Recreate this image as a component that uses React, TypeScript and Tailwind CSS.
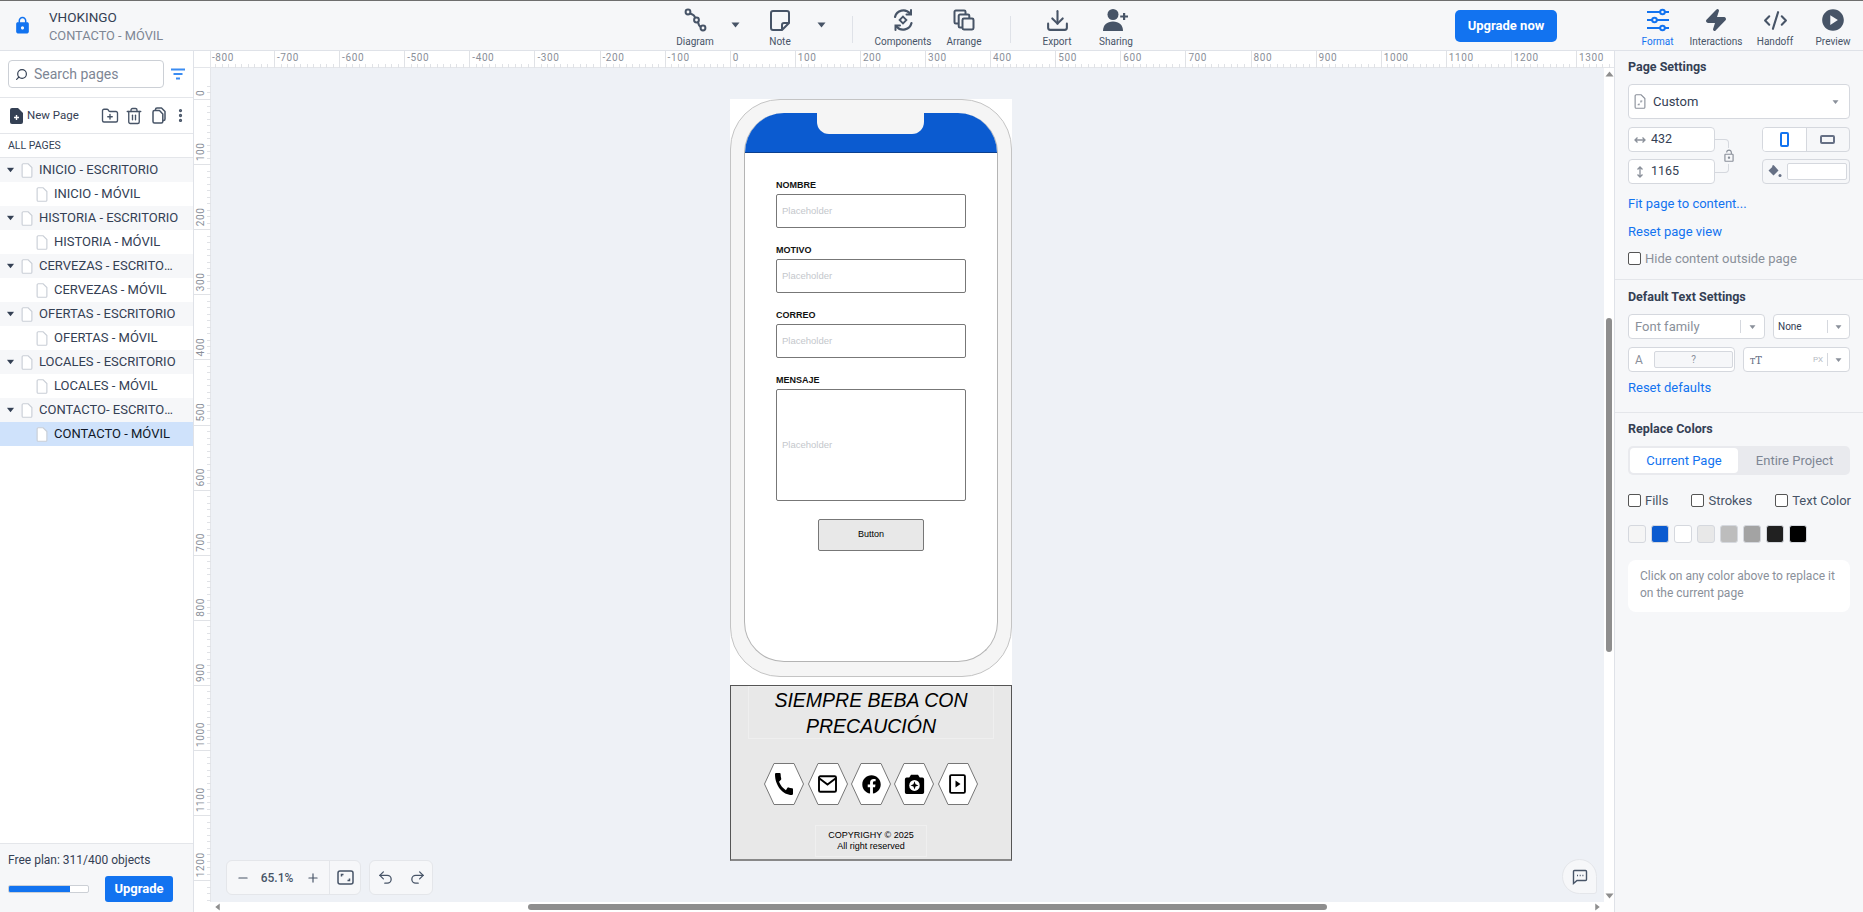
import React from 'react';
import { Search, Plus, Minus, Undo2, Redo2, MoreVertical, Trash2, FolderPlus, Zap, Code2, Download } from 'lucide-react';
import { FaFacebook } from 'react-icons/fa';
import { MdLock, MdOutlineLockOpen, MdPlayCircle } from 'react-icons/md';

const Caret = ({ className = '' }: { className?: string }) => (
  <svg width="9" height="6" viewBox="0 0 9 6" className={className}><path d="M0.5 0.5h8L4.5 5.5z" fill="currentColor" /></svg>
);

const PageIcon = ({ size = 14 }: { size?: number }) => (
  <svg width={size} height={size * 1.25} viewBox="0 0 12 16" fill="none" stroke="#c9ced6" strokeWidth="1.2">
    <path d="M2 .8h5.2l4 4V14a1.2 1.2 0 0 1-1.2 1.2H2A1.2 1.2 0 0 1 .8 14V2A1.2 1.2 0 0 1 2 .8z" fill="#fff" />
  </svg>
);

const DiagramIcon = () => (
  <svg width="24" height="24" viewBox="0 0 24 24" fill="none" stroke="#475467" strokeWidth="2">
    <circle cx="5" cy="4" r="2.4" /><circle cx="13.5" cy="12" r="2.4" /><circle cx="20" cy="20" r="2.4" />
    <path d="M7 5.5c3 1 5 2 5 4.3M15 14c.5 3 1.5 4.5 3 5" />
  </svg>
);
const NoteIcon = () => (
  <svg width="24" height="24" viewBox="0 0 24 24" fill="none" stroke="#475467" strokeWidth="2" strokeLinejoin="round">
    <path d="M5 3h14a2 2 0 0 1 2 2v10l-7 7H5a2 2 0 0 1-2-2V5a2 2 0 0 1 2-2z" /><path d="M21 15h-5a2 2 0 0 0-2 2v5" />
  </svg>
);
const ComponentsIcon = () => (
  <svg width="24" height="24" viewBox="0 0 24 24" fill="none" stroke="#475467" strokeWidth="2.2" strokeLinecap="round">
    <path d="M4 9a8.6 8.6 0 0 1 15-3.5M20.5 15a8.6 8.6 0 0 1-15 3.5" />
    <path d="M20 2v4.5h-4.5M4.5 22v-4.5H9" strokeWidth="2" />
    <path d="M12 8.6l3.4 3.4-3.4 3.4L8.6 12z" strokeWidth="1.8" />
  </svg>
);
const ArrangeIcon = () => (
  <svg width="24" height="24" viewBox="0 0 24 24" fill="none" stroke="#475467" strokeWidth="2">
    <path d="M6 15.5H3.8A1.3 1.3 0 0 1 2.5 14.2V3.8a1.3 1.3 0 0 1 1.3-1.3h8.4A1.3 1.3 0 0 1 13.5 3.8V6" />
    <path d="M10 19.5H8a1.3 1.3 0 0 1-1.3-1.3V7.8A1.3 1.3 0 0 1 8 6.5h8a1.3 1.3 0 0 1 1.3 1.3V10" />
    <rect x="10.5" y="10.5" width="11" height="11" rx="1.4" />
  </svg>
);
const SlidersIcon = () => (
  <svg width="24" height="24" viewBox="0 0 24 24" fill="none" stroke="#1273f0" strokeWidth="2">
    <path d="M1 4h13M19 4h4M1 12h5M11 12h12M1 20h13M19 20h4" />
    <circle cx="16.5" cy="4" r="2.3" /><circle cx="8.5" cy="12" r="2.3" /><circle cx="16.5" cy="20" r="2.3" />
  </svg>
);
const FilterIcon = () => (
  <svg width="14" height="12" viewBox="0 0 14 12" fill="none" stroke="#3b8cf2" strokeWidth="1.8"><path d="M0 1.5h14M2.5 6h9M5 10.5h4" /></svg>
);
const PagesCopyIcon = () => (
  <svg width="14" height="17" viewBox="0 0 14 17" fill="none" stroke="#475467" strokeWidth="1.5" strokeLinejoin="round">
    <path d="M3.500 3.200V2.500A1.500 1.500 0 0 1 5 1h4.500L13 4.500v7.500a1.500 1.500 0 0 1-1.500 1.500h-.7" />
    <path d="M2.500 3.500h5L10.800 7v7.500a1.500 1.500 0 0 1-1.500 1.500H2.500A1.500 1.500 0 0 1 1 14.500V5a1.500 1.500 0 0 1 1.500-1.500z" />
  </svg>
);

const Tool = ({ w, icon, label, active }: { w: string; icon: React.ReactNode; label: string; active?: boolean }) => (
  <div className={`${w} flex flex-col items-center shrink-0`}>
    <div className="h-[26px] flex items-center justify-center mt-[6px]">{icon}</div>
    <div className={`text-[10px] leading-[12px] mt-[3px] whitespace-nowrap ${active ? 'text-[#1273f0]' : 'text-[#475467]'}`}>{label}</div>
  </div>
);

const Header = () => (
  <header className="h-[51px] shrink-0 flex bg-[#f6f7f9] border-t border-t-[#6e6e6e] border-b border-b-[#dfe2e8]">
    <div className="w-[665px] shrink-0 flex">
      <div className="w-[49px] flex items-center justify-center pr-[4px]"><MdLock size={19} color="#1273f0" /></div>
      <div className="pt-[8px]">
        <div className="text-[13.500px] leading-[16px] text-[#344054]">VHOKINGO</div>
        <div className="text-[12.800px] leading-[16px] mt-[3px] text-[#7d8694]">CONTACTO - MÓVIL</div>
      </div>
    </div>
    <Tool w="w-[60px]" icon={<DiagramIcon />} label="Diagram" />
    <div className="w-[20px] flex justify-center pt-[21px] text-[#475467]"><Caret /></div>
    <div className="w-[5px]" />
    <Tool w="w-[60px]" icon={<NoteIcon />} label="Note" />
    <div className="w-[22px] flex justify-center pt-[21px] text-[#475467]"><Caret /></div>
    <div className="w-[20px]" />
    <div className="w-px h-[27px] mt-[15px] bg-[#dfe2e8]" />
    <div className="w-[18px]" />
    <Tool w="w-[64px]" icon={<ComponentsIcon />} label="Components" />
    <div className="w-[4px]" />
    <Tool w="w-[50px]" icon={<ArrangeIcon />} label="Arrange" />
    <div className="w-[21px]" />
    <div className="w-px h-[27px] mt-[15px] bg-[#dfe2e8]" />
    <div className="w-[21px]" />
    <Tool w="w-[50px]" icon={<Download size={25} color="#475467" strokeWidth={2} />} label="Export" />
    <div className="w-[9px]" />
    <Tool w="w-[50px]" icon={<svg width="26" height="24" viewBox="0 0 26 24" fill="#475467"><circle cx="10" cy="6.5" r="5.5" /><path d="M0 23c0-6 4-9.5 10-9.5S20 17 20 23z" /><path d="M20 5h2.2V7.500H25v2h-2.800V12H20V9.500h-2.800v-2H20z" /></svg>} label="Sharing" />
    <div className="w-[314px]" />
    <div className="w-[102px] h-[32px] mt-[9px] rounded-[5px] bg-[#1273f0] text-white text-[13px] font-bold flex items-center justify-center">Upgrade now</div>
    <div className="w-[75px]" />
    <Tool w="w-[51px]" active icon={<SlidersIcon />} label="Format" />
    <Tool w="w-[66px]" icon={<Zap size={24} color="#475467" fill="#475467" />} label="Interactions" />
    <Tool w="w-[52px]" icon={<Code2 size={25} color="#475467" strokeWidth={2} />} label="Handoff" />
    <div className="w-[6px]" />
    <Tool w="w-[52px]" icon={<MdPlayCircle size={26} color="#475467" />} label="Preview" />
  </header>
);

const pages = ['INICIO', 'HISTORIA', 'CERVEZAS', 'OFERTAS', 'LOCALES', 'CONTACTO'];

const Sidebar = () => (
  <aside className="w-[194px] shrink-0 flex flex-col bg-white border-r border-[#dfe2e8]">
    <div className="h-[47px] shrink-0 flex items-center pl-[8px] border-b border-[#e4e6ea]">
      <div className="w-[156px] h-[28px] rounded-[4px] border border-[#ccd0d6] flex items-center pl-[6px] gap-[6px]">
        <Search size={13} color="#344054" className="-scale-x-100" strokeWidth={2.2} />
        <span className="text-[14px] text-[#7d8694]">Search pages</span>
      </div>
      <div className="ml-[7px]"><FilterIcon /></div>
    </div>
    <div className="h-[36px] shrink-0 flex items-center border-b border-[#e4e6ea] pl-[10px] text-[#475467]">
      <svg width="13" height="16" viewBox="0 0 13 16"><path d="M2 0h6l5 5v9a2 2 0 0 1-2 2H2a2 2 0 0 1-2-2V2a2 2 0 0 1 2-2z" fill="#344054" /><path d="M6.500 7v5M4 9.500h5" stroke="#fff" strokeWidth="1.4" /></svg>
      <span className="ml-[4px] text-[11.500px] text-[#344054]">New Page</span>
      <FolderPlus size={18} className="ml-[22px]" strokeWidth={1.8} />
      <Trash2 size={18} className="ml-[6px]" strokeWidth={1.8} />
      <div className="ml-[9px] flex"><PagesCopyIcon /></div>
      <MoreVertical size={17} className="ml-[6px]" strokeWidth={2.6} />
    </div>
    <div className="h-[24px] shrink-0 flex items-center pl-[8px] text-[10.500px] text-[#344054] border-b border-[#e4e6ea]">ALL PAGES</div>
    <div className="flex-1">
      {pages.map((p) => (
        <div key={p}>
          <div className="h-[24px] flex items-center bg-[#f6f7f9] pl-[6px] text-[#344054]">
            <Caret className="text-[#344054] scale-90" />
            <span className="ml-[6px] flex"><PageIcon size={12} /></span>
            <span className="ml-[6px] text-[13px] truncate w-[141px]">{p === 'CONTACTO' ? 'CONTACTO- ESCRITORIO' : `${p} - ESCRITORIO`}</span>
          </div>
          <div className={`h-[24px] flex items-center pl-[36px] ${p === 'CONTACTO' ? 'bg-[#cfe2fb] text-[#101828]' : 'text-[#344054]'}`}>
            <PageIcon size={12} />
            <span className="ml-[6px] text-[13px]">{p} - MÓVIL</span>
          </div>
        </div>
      ))}
    </div>
    <div className="h-[69px] shrink-0 bg-[#f6f7f9] border-t border-[#e4e6ea] pl-[8px]">
      <div className="text-[12px] leading-[14px] text-[#344054] mt-[9px]">Free plan: 311/400 objects</div>
      <div className="flex items-center mt-[9px]">
        <div className="w-[81px] h-[8px] rounded-[2px] border border-[#ccd0d6] bg-white overflow-hidden"><div className="w-[61px] h-full bg-[#1273f0]" /></div>
        <div className="ml-[16px] w-[68px] h-[26px] rounded-[3px] bg-[#1273f0] text-white text-[13px] font-bold flex items-center justify-center">Upgrade</div>
      </div>
    </div>
  </aside>
);

const hLabels = Array.from({ length: 22 }, (_, i) => -800 + i * 100);
const hTicks = Array.from({ length: 220 }, (_, i) => -800 + i * 10);
const vLabels = Array.from({ length: 13 }, (_, i) => i * 100);
const vTicks = Array.from({ length: 135 }, (_, i) => -20 + i * 10);

const HRuler = () => (
  <svg width="1403" height="17" className="block">
    <line x1="0" x2="1403" y1="16.5" y2="16.5" stroke="#e4e6ea" />
    {hTicks.map((u) => {
      const x = Math.round(729.7 + 0.651 * u - 211) + 0.5;
      return <line key={u} x1={x} x2={x} y1={u % 100 === 0 ? 0 : 13} y2={17} stroke="#e0e2e6" />;
    })}
    {hLabels.map((u) => (
      <text key={u} x={729.7 + 0.651 * u - 211 + 3} y={10} fontSize="10" letterSpacing="0.6" fill="#8a8f99">{u}</text>
    ))}
  </svg>
);
const VRuler = () => (
  <svg width="17" height="835" className="block shrink-0">
    <line x1="16.5" x2="16.5" y1="0" y2="835" stroke="#e4e6ea" />
    {vTicks.map((u) => {
      const y = Math.round(99 + 0.651 * u - 68) + 0.5;
      return <line key={u} y1={y} y2={y} x1={u % 100 === 0 ? 0 : 13} x2={17} stroke="#e0e2e6" />;
    })}
    {vLabels.map((u) => {
      const y = 99 + 0.651 * u - 68 - 3;
      return <text key={u} transform={`translate(10 ${y}) rotate(-90)`} fontSize="10" letterSpacing="0.6" fill="#8a8f99">{u}</text>;
    })}
  </svg>
);

const Field = ({ label, tall }: { label: string; tall?: boolean }) => (
  <div className="mb-[18px]">
    <div className="text-[9px] leading-[9px] pb-[4px] font-bold text-[#111]">{label}</div>
    <div className={`w-[190px] ${tall ? 'h-[112px]' : 'h-[34px]'} bg-white border border-[#777] rounded-[2px] flex items-center pl-[5px] text-[9.500px] text-[#c4c7cc]`}>Placeholder</div>
  </div>
);

const PhoneGlyph = () => (
  <svg width="18" height="22" viewBox="3 3 18 18" preserveAspectRatio="none">
    <path d="M20.01 15.38c-1.23 0-2.42-.2-3.53-.56a.977.977 0 0 0-1.01.24l-1.57 1.97c-2.83-1.35-5.48-3.9-6.89-6.83l1.95-1.66c.27-.28.35-.67.24-1.02-.37-1.11-.56-2.3-.56-3.53 0-.54-.45-.99-.99-.99H4.19C3.65 3 3 3.24 3 3.99 3 13.28 10.73 21 20.01 21c.71 0 .99-.63.99-1.18v-3.45c0-.54-.45-.99-.99-.99z" fill="#000" />
  </svg>
);
const MailGlyph = () => (
  <svg width="19" height="18" viewBox="0 0 19 18" fill="none" stroke="#000" strokeWidth="1.900">
    <rect x="1" y="1.200" width="17" height="15.600" rx="1.400" /><path d="M1.500 3.500l8 6 8-6" />
  </svg>
);
const CameraStar = () => (
  <svg width="21" height="22" viewBox="0 0 24 24" preserveAspectRatio="none">
    <path d="M8 2h8l2 3h3a2 2 0 0 1 2 2v14a2 2 0 0 1-2 2H3a2 2 0 0 1-2-2V7a2 2 0 0 1 2-2h3z" fill="#000" />
    <circle cx="12" cy="13.500" r="6" fill="#fff" />
    <path d="M12 9l1.200 3.300L16.500 13.500l-3.300 1.200L12 18l-1.200-3.300L7.500 13.500l3.300-1.200z" fill="#000" />
  </svg>
);
const VideoBox = () => (
  <svg width="17" height="20" viewBox="0 0 17 20" fill="none"><rect x="1.100" y="1.100" width="14.800" height="17.800" rx="1.200" stroke="#000" strokeWidth="1.900" /><path d="M6.500 6.500l5 3.500-5 3.500z" fill="#000" /></svg>
);

const Hex = ({ children }: { children: React.ReactNode }) => (
  <div className="relative w-[40px] h-[42px] flex items-center justify-center">
    <svg width="40" height="42" viewBox="0 0 40 42" className="absolute inset-0">
      <polygon points="10,0.5 30,0.5 39.500,21 30,41.500 10,41.500 0.500,21" fill="#fff" stroke="#777" />
    </svg>
    <div className="relative flex">{children}</div>
  </div>
);

const Design = () => (
  <div className="absolute left-[519px] top-[31px] w-[282px] h-[762px] bg-white flex flex-col" style={{ fontFamily: '"Liberation Sans", Arial, sans-serif' }}>
    <div className="h-[578px] bg-[#f5f5f5] border border-[#c4c4c4] rounded-[50px] pt-[13px] px-[13px] pb-[14px] flex">
      <div className="relative flex-1 bg-white border-x border-b border-[#b4b4b4] rounded-[40px] overflow-hidden flex flex-col">
        <div className="h-[40px] shrink-0 bg-[#0b5bd0] border-b border-[#0a3f8f]" />
        <div className="absolute left-[72px] top-0 w-[107px] h-[21px] bg-[#f5f5f5] rounded-b-[12px]" />
        <div className="pl-[31px] pt-[28px]">
          <Field label="NOMBRE" />
          <Field label="MOTIVO" />
          <Field label="CORREO" />
          <Field label="MENSAJE" tall />
          <div className="ml-[42px] w-[106px] h-[32px] bg-[#e8e8e8] border border-[#777] rounded-[2px] flex items-center justify-center text-[9px] text-black">Button</div>
        </div>
      </div>
    </div>
    <div className="h-[8px]" />
    <div className="flex-1 bg-[#e8e8e8] border border-[#555] border-b-2 border-b-[#888] flex flex-col items-center">
      <div className="w-[246px] h-[53px] border border-[#efefef] text-[19.500px] leading-[26px] italic text-black text-center">SIEMPRE BEBA CON<br />PRECAUCIÓN</div>
      <div className="flex gap-[3.300px] mt-[24px]">
        <Hex><PhoneGlyph /></Hex>
        <Hex><MailGlyph /></Hex>
        <Hex><FaFacebook size={19} color="#000" /></Hex>
        <Hex><CameraStar /></Hex>
        <Hex><VideoBox /></Hex>
      </div>
      <div className="mt-[20px] w-[112px] h-[32px] border border-[#efefef] text-[9px] leading-[11px] text-black text-center flex flex-col justify-center">
        <div>COPYRIGHY © 2025</div>
        <div>All right reserved</div>
      </div>
    </div>
  </div>
);

const FitIcon = () => (
  <svg width="17" height="15" viewBox="0 0 17 15" fill="none" stroke="#475467" strokeWidth="1.500">
    <rect x="1" y="1" width="15" height="13" rx="2" />
    <path d="M4.500 6.500v-2h2M12.500 8.500v2h-2" />
  </svg>
);

const CanvasControls = () => (
  <>
    <div className="absolute left-[15px] top-[792px] w-[135px] h-[35px] bg-[#f6f7f9] border border-[#e4e6ea] rounded-[6px] flex items-center text-[#475467]">
      <Minus size={14} className="ml-[9px]" strokeWidth={2} />
      <span className="ml-[8px] w-[38px] text-center text-[12px] font-medium">65.1%</span>
      <Plus size={14} className="ml-[10px]" strokeWidth={2} />
      <div className="ml-[9px] h-full w-px bg-[#e4e6ea]" />
      <div className="ml-[7px] flex"><FitIcon /></div>
    </div>
    <div className="absolute left-[158px] top-[792px] w-[64px] h-[35px] bg-[#f6f7f9] border border-[#e4e6ea] rounded-[6px] flex items-center justify-center gap-[15px] text-[#475467]">
      <Undo2 size={17} strokeWidth={1.800} /><Redo2 size={17} strokeWidth={1.800} />
    </div>
    <div className="absolute left-[1351px] top-[791px] w-[35px] h-[35px] bg-[#f6f7f9] border border-[#e4e6ea] rounded-[18px] rounded-br-[3px] flex items-center justify-center">
      <svg width="16" height="16" viewBox="0 0 16 16" fill="none" stroke="#475467" strokeWidth="1.400"><path d="M2.500 1.500h11a1 1 0 0 1 1 1v8a1 1 0 0 1-1 1H5L1.500 14.500V2.500a1 1 0 0 1 1-1z" /><path d="M5 6.500h1M7.700 6.500h1M10.400 6.500h1" /></svg>
    </div>
  </>
);

const Main = () => (
  <main className="flex-1 min-w-0 flex flex-col bg-white">
    <div className="h-[17px] shrink-0 flex">
      <div className="w-[17px] shrink-0 border-b border-r border-[#e4e6ea]" />
      <HRuler />
    </div>
    <div className="flex-1 min-h-0 flex">
      <VRuler />
      <div className="relative flex-1 bg-[#eef1f6] overflow-hidden">
        <Design />
        <CanvasControls />
      </div>
      <div className="w-[10px] shrink-0 bg-white flex flex-col items-center justify-between py-[3px]">
        <Caret className="text-[#8e8e8e] rotate-180" />
        <div className="absolute left-[1606px] top-[318px] w-[6px] h-[334px] rounded-full bg-[#8e8e8e]" />
        <Caret className="text-[#8e8e8e]" />
      </div>
    </div>
    <div className="relative h-[10px] shrink-0 bg-white flex items-center justify-between pl-[19px] pr-[12px]">
      <Caret className="text-[#8e8e8e] rotate-90 scale-90" />
      <div className="absolute left-[334px] top-[2px] w-[799px] h-[6px] rounded-full bg-[#8e8e8e]" />
      <Caret className="text-[#8e8e8e] -rotate-90 scale-90" />
    </div>
  </main>
);

const Check = ({ label, muted }: { label: string; muted?: boolean }) => (
  <div className="flex items-center gap-[4px]">
    <div className="w-[13px] h-[13px] border border-[#555] rounded-[2px] bg-white" />
    <span className={`text-[13px] leading-[15px] ${muted ? 'text-[#8a909a]' : 'text-[#475467]'}`}>{label}</span>
  </div>
);

const colors = ['#f5f5f5', '#0b5bd0', '#ffffff', '#e8e8e8', '#bdbdbd', '#a3a3a3', '#212121', '#000000'];
const boxCls = 'bg-white border border-[#d5d8de] rounded-[4px]';

const ArrowH = () => (
  <svg width="12" height="8" viewBox="0 0 12 8" fill="none" stroke="#8a909a" strokeWidth="1.300"><path d="M1 4h10M3.500 1.500L1 4l2.500 2.500M8.500 1.500L11 4 8.500 6.500" /></svg>
);
const ArrowV = () => (
  <svg width="8" height="12" viewBox="0 0 8 12" fill="none" stroke="#8a909a" strokeWidth="1.300"><path d="M4 1v10M1.500 3.500L4 1l2.500 2.500M1.500 8.500L4 11l2.500-2.500" /></svg>
);
const BucketIcon = () => (
  <svg width="14" height="13" viewBox="0 0 14 13" fill="#667085"><path d="M5.500 0L6.500 1 10.500 5.500 5.500 10.500 .5 5.500 4.500 1.800 3.800 1.100z" /><circle cx="12" cy="10.500" r="1.500" /></svg>
);

const RightPanel = () => (
  <aside className="w-[249px] shrink-0 bg-[#f6f7f9] border-l border-[#dfe2e8] text-[#344054]">
    <div className="px-[13px] pt-[9px] h-[229px] border-b border-[#e4e6ea]">
      <div className="text-[12.500px] leading-[14px] font-bold">Page Settings</div>
      <div className={`${boxCls} mt-[10px] h-[35px] w-[222px] flex items-center pl-[5px] pr-[9px]`}>
        <svg width="12" height="15" viewBox="0 0 12 16" fill="none" stroke="#8a909a" strokeWidth="1.200"><path d="M2 .8h5.200l4 4V14a1.200 1.200 0 0 1-1.200 1.200H2A1.200 1.200 0 0 1 .8 14V2A1.200 1.200 0 0 1 2 .8z" /><path d="M3.500 11.500h1.500v-1.500M8.500 7.500H7v1.500" /></svg>
        <span className="ml-[7px] text-[13px]">Custom</span>
        <Caret className="ml-auto text-[#8a909a] scale-75" />
      </div>
      <div className="flex mt-[8px] h-[57px]">
        <div className="flex flex-col gap-[7px]">
          <div className={`${boxCls} w-[87px] h-[25px] flex items-center pl-[5px] text-[12.500px]`}><span className="w-[12px] flex justify-center"><ArrowH /></span><span className="ml-[5px]">432</span></div>
          <div className={`${boxCls} w-[87px] h-[25px] flex items-center pl-[5px] text-[12.500px]`}><span className="w-[12px] flex justify-center"><ArrowV /></span><span className="ml-[5px]">1165</span></div>
        </div>
        <div className="relative w-[47px]">
          <div className="absolute left-0 top-[12px] w-[14px] h-[34px] border border-l-0 border-[#d5d8de] rounded-r-[4px]" />
          <div className="absolute left-[7px] top-[21px] bg-[#f6f7f9] flex py-[1px]"><MdOutlineLockOpen size={14} color="#8a909a" /></div>
        </div>
        <div className="flex flex-col gap-[7px]">
          <div className="w-[88px] h-[25px] border border-[#d5d8de] rounded-[4px] flex overflow-hidden">
            <div className="flex-1 bg-white flex items-center justify-center border-r border-[#d5d8de]"><div className="w-[9px] h-[15px] border-2 border-[#1273f0] rounded-[2px]" /></div>
            <div className="flex-1 flex items-center justify-center"><div className="w-[15px] h-[9px] border-2 border-[#667085] rounded-[2px]" /></div>
          </div>
          <div className="w-[88px] h-[25px] border border-[#d5d8de] rounded-[4px] flex items-center pl-[5px] gap-[5px]">
            <BucketIcon />
            <div className="w-[60px] h-[17px] bg-white border border-[#d5d8de] rounded-[2px]" />
          </div>
        </div>
      </div>
      <div className="text-[13px] leading-[14px] text-[#1273f0] mt-[13px]">Fit page to content...</div>
      <div className="text-[13px] leading-[14px] text-[#1273f0] mt-[14px]">Reset page view</div>
      <div className="mt-[12px]"><Check label="Hide content outside page" muted /></div>
    </div>
    <div className="px-[13px] pt-[10px] h-[133px] border-b border-[#e4e6ea]">
      <div className="text-[12.500px] leading-[14px] font-bold">Default Text Settings</div>
      <div className="flex gap-[8px] mt-[10px]">
        <div className={`${boxCls} w-[137px] h-[25px] flex items-center pl-[6px] text-[13px] text-[#8a909a]`}>Font family<div className="ml-auto w-px h-[13px] bg-[#d5d8de]" /><Caret className="mx-[7px] text-[#8a909a] scale-75" /></div>
        <div className={`${boxCls} w-[77px] h-[25px] flex items-center pl-[4px] text-[10px]`}>None<div className="ml-auto w-px h-[13px] bg-[#d5d8de]" /><Caret className="mx-[6px] text-[#8a909a] scale-75" /></div>
      </div>
      <div className="flex gap-[8px] mt-[8px]">
        <div className={`${boxCls} w-[107px] h-[25px] flex items-center pl-[6px]`}>
          <span className="text-[12px] text-[#8a909a] w-[19px]">A</span>
          <div className="w-[79px] h-[17px] bg-[#f6f7f9] border border-[#d5d8de] rounded-[2px] flex items-center justify-center text-[10px] text-[#8a909a]">?</div>
        </div>
        <div className={`${boxCls} w-[107px] h-[25px] flex items-center pl-[6px]`}>
          <span className="text-[12px] text-[#667085] font-serif leading-none">ᴛT</span>
          <span className="ml-auto text-[8px] text-[#b5bac3]">PX</span>
          <div className="ml-[4px] w-px h-[13px] bg-[#d5d8de]" /><Caret className="mx-[6px] text-[#8a909a] scale-75" />
        </div>
      </div>
      <div className="text-[13px] leading-[14px] text-[#1273f0] mt-[9px]">Reset defaults</div>
    </div>
    <div className="px-[13px] pt-[9px]">
      <div className="text-[12.500px] leading-[14px] font-bold">Replace Colors</div>
      <div className="mt-[10px] w-[222px] h-[29px] rounded-[5px] bg-[#e9eaee] p-[2px] flex text-[13px]">
        <div className="w-[108px] bg-white rounded-[4px] text-[#1273f0] flex items-center justify-center">Current Page</div>
        <div className="flex-1 text-[#7d8694] flex items-center justify-center pl-[3px]">Entire Project</div>
      </div>
      <div className="flex mt-[18px] w-[223px] justify-between"><Check label="Fills" /><Check label="Strokes" /><Check label="Text Color" /></div>
      <div className="flex gap-[5px] mt-[17px]">
        {colors.map((c) => <div key={c} className="w-[18px] h-[18px] rounded-[3px] border border-[#d5d8de]" style={{ backgroundColor: c }} />)}
      </div>
      <div className="mt-[17px] w-[222px] h-[52px] rounded-[8px] bg-white pl-[12px] pr-[8px] pt-[8px] text-[12px] leading-[17px] text-[#8a909a]">Click on any color above to replace it on the current page</div>
    </div>
  </aside>
);

export default function App() {
  return (
    <div className="w-[1863px] h-[912px] overflow-hidden flex flex-col bg-white" style={{ fontFamily: 'Roboto, sans-serif' }}>
      <Header />
      <div className="flex-1 min-h-0 flex">
        <Sidebar />
        <Main />
        <RightPanel />
      </div>
    </div>
  );
}
